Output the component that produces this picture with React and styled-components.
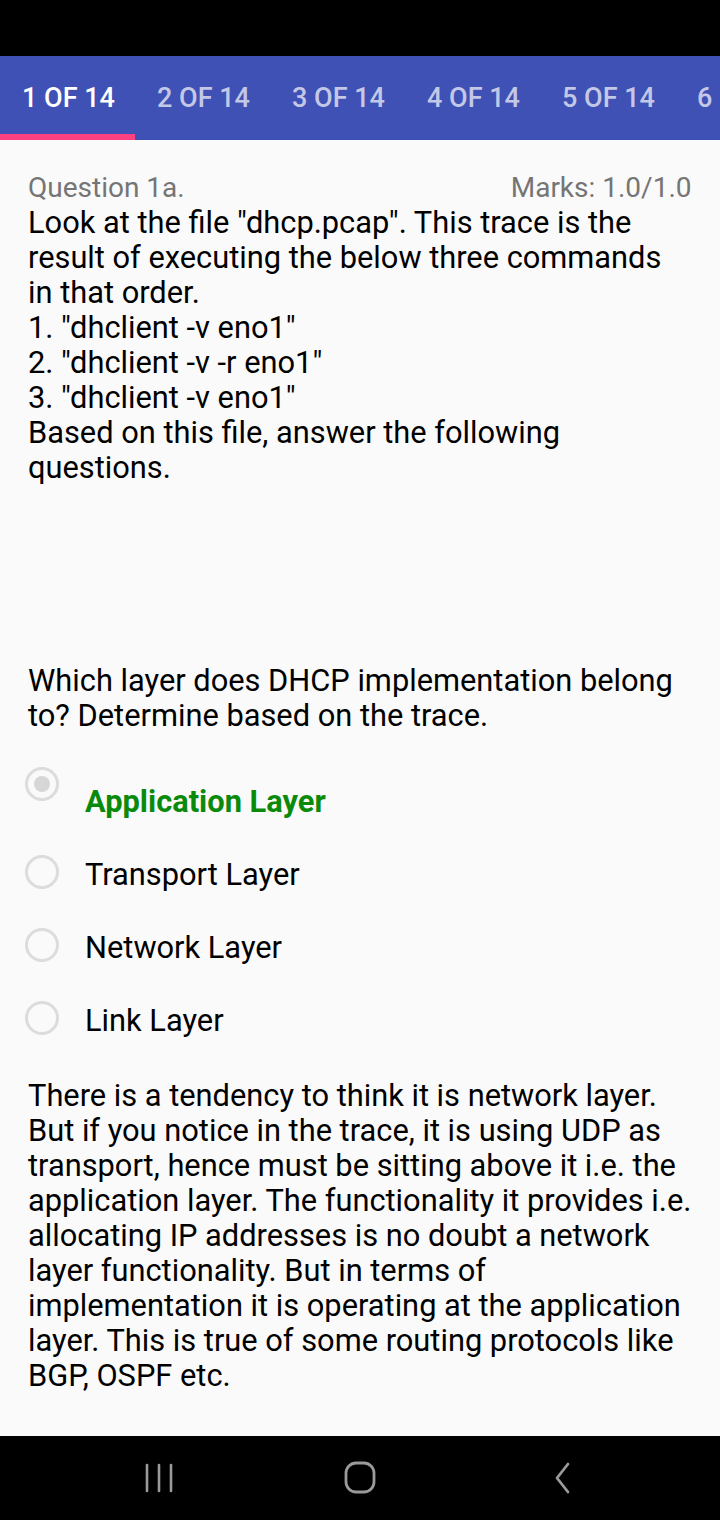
import React from 'react'
import styled, { createGlobalStyle } from 'styled-components'

const GlobalStyle = createGlobalStyle`
  html, body { margin: 0; padding: 0; background: #fafafa; }
  body { font-family: Roboto, "Noto Sans", sans-serif; }
`

const tabs = ['1 OF 14', '2 OF 14', '3 OF 14', '4 OF 14', '5 OF 14', '6 OF 14']

const options = [
  { label: 'Application Layer', selected: true },
  { label: 'Transport Layer' },
  { label: 'Network Layer' },
  { label: 'Link Layer' },
]

const App = () => {
  return <Screen>
    <GlobalStyle />
    <StatusBar />
    <TabBar>
      {tabs.map((t, i) => <Tab key={t} active={i === 0}>{t}</Tab>)}
    </TabBar>
    <Content>
      <Header>
        <span>Question 1a.</span>
        <span>Marks: 1.0/1.0</span>
      </Header>
      <Paragraph>
        Look at the file "dhcp.pcap". This trace is the result of executing the below three commands in that order.<br />
        1. "dhclient -v eno1"<br />
        2. "dhclient -v -r eno1"<br />
        3. "dhclient -v eno1"<br />
        Based on this file, answer the following questions.
      </Paragraph>
      <Prompt>Which layer does DHCP implementation belong to? Determine based on the trace.</Prompt>
      <Options>
        {options.map(o => <Option key={o.label} selected={o.selected}>
          <Radio selected={o.selected} />
          <OptionLabel selected={o.selected}>{o.label}</OptionLabel>
        </Option>)}
      </Options>
      <Paragraph>
        There is a tendency to think it is network layer. But if you notice in the trace, it is using UDP as transport, hence must be sitting above it i.e. the application layer. The functionality it provides i.e. allocating IP addresses is no doubt a network layer functionality. But in terms of implementation it is operating at the application layer. This is true of some routing protocols like BGP, OSPF etc.
      </Paragraph>
    </Content>
    <NavBar>
      <NavSlot>
        <svg width="30" height="30" viewBox="0 0 30 30">
          <g stroke="#9a9a9a" strokeWidth="2.6" strokeLinecap="round">
            <line x1="3" y1="2" x2="3" y2="28" />
            <line x1="15" y1="2" x2="15" y2="28" />
            <line x1="27" y1="2" x2="27" y2="28" />
          </g>
        </svg>
      </NavSlot>
      <NavSlot>
        <svg width="34" height="34" viewBox="0 0 34 34">
          <rect x="3" y="2" width="28" height="29" rx="10" fill="none" stroke="#9a9a9a" strokeWidth="2.8" />
        </svg>
      </NavSlot>
      <NavSlot>
        <svg width="30" height="34" viewBox="0 0 30 34">
          <polyline points="22,3 11,17 22,31" fill="none" stroke="#9a9a9a" strokeWidth="2.8" strokeLinecap="round" strokeLinejoin="round" />
        </svg>
      </NavSlot>
    </NavBar>
  </Screen>
}

const Screen = styled.div`
  width: 720px;
  height: 1520px;
  display: flex;
  flex-direction: column;
  background: #fafafa;
  overflow: hidden;
`

const StatusBar = styled.div`
  height: 56px;
  background: #000;
  flex-shrink: 0;
`

const TabBar = styled.div`
  height: 84px;
  background: #3f51b5;
  display: flex;
  flex-shrink: 0;
  overflow: hidden;
`

const Tab = styled.div`
  flex: 0 0 135px;
  box-sizing: border-box;
  padding-left: 22px;
  display: flex;
  align-items: center;
  font-size: 27px;
  font-weight: 500;
  white-space: nowrap;
  overflow: hidden;
  color: ${p => p.active ? '#ffffff' : 'rgba(255,255,255,0.7)'};
  border-bottom: 6px solid ${p => p.active ? '#ff4081' : 'transparent'};
  padding-top: 6px;
`

const Content = styled.div`
  flex: 1;
  padding: 30px 28.5px 0 28px;
  color: #000;
`

const Header = styled.div`
  display: flex;
  justify-content: space-between;
  font-size: 28px;
  line-height: 35px;
  color: #757575;
`

const Paragraph = styled.p`
  margin: 0;
  font-size: 30.8px;
  line-height: 35px;
`

const Prompt = styled(Paragraph)`
  margin-top: 178px;
`

const Options = styled.div`
  display: flex;
  flex-direction: column;
  margin: 26px 0 24px -3px;
`

const Option = styled.div`
  display: flex;
  align-items: ${p => p.selected ? 'flex-start' : 'center'};
  height: ${p => p.selected ? '76px' : '73px'};
`

const Radio = styled.div`
  width: 34px;
  height: 34px;
  box-sizing: border-box;
  border-radius: 50%;
  border: 3px solid #dcdcdc;
  flex-shrink: 0;
  position: relative;
  margin-right: 26px;
  margin-top: ${p => p.selected ? '8px' : '0'};
  &::after {
    content: '';
    display: ${p => p.selected ? 'block' : 'none'};
    position: absolute;
    left: 6px;
    top: 6px;
    width: 16px;
    height: 16px;
    border-radius: 50%;
    background: #d6d6d6;
  }
`

const OptionLabel = styled.span`
  font-size: 30.8px;
  font-weight: ${p => p.selected ? 700 : 400};
  color: ${p => p.selected ? '#0a8a0a' : '#000'};
  padding-top: ${p => p.selected ? '24px' : '6px'};
`

const NavBar = styled.div`
  height: 84px;
  background: #000;
  flex-shrink: 0;
  display: flex;
  align-items: center;
  justify-content: center;
`

const NavSlot = styled.div`
  width: 201px;
  display: flex;
  justify-content: center;
  align-items: center;
`

export default App
